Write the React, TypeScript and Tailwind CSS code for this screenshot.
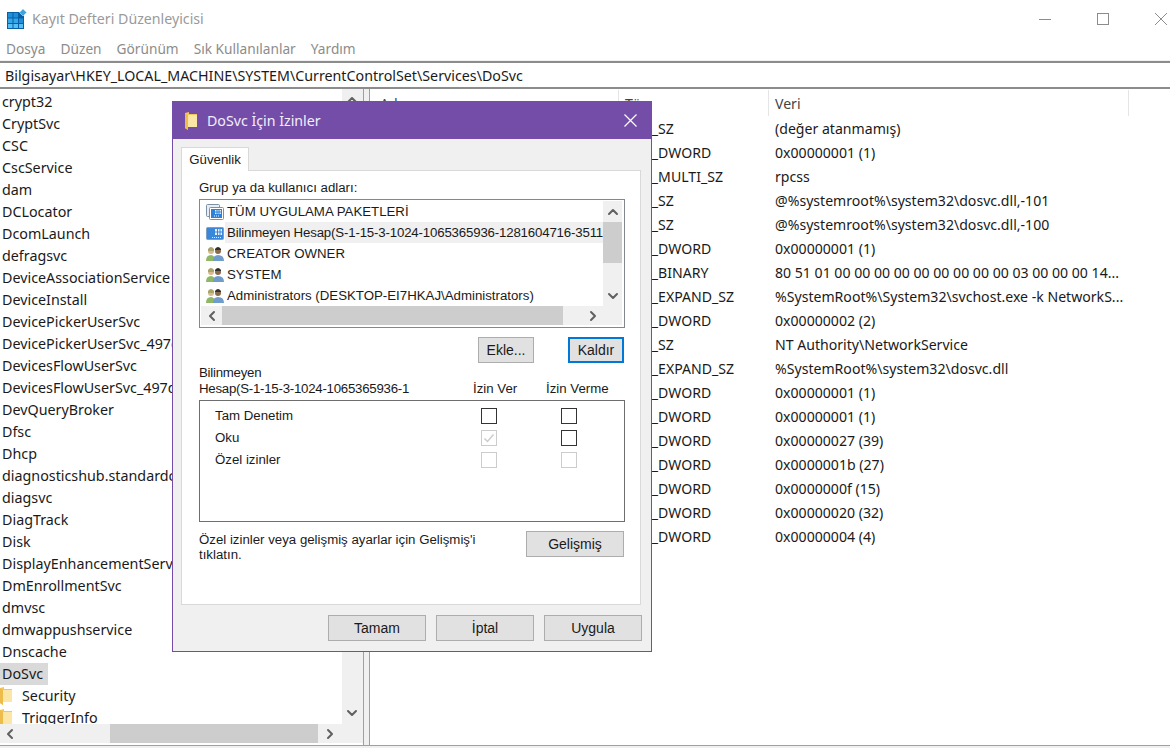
import React from 'react';
import { ChevronUp, ChevronDown, ChevronLeft, ChevronRight } from 'lucide-react';

const keys = [
  'crypt32', 'CryptSvc', 'CSC', 'CscService', 'dam', 'DCLocator', 'DcomLaunch', 'defragsvc',
  'DeviceAssociationService', 'DeviceInstall', 'DevicePickerUserSvc', 'DevicePickerUserSvc_497d',
  'DevicesFlowUserSvc', 'DevicesFlowUserSvc_497d', 'DevQueryBroker', 'Dfsc', 'Dhcp',
  'diagnosticshub.standardco', 'diagsvc', 'DiagTrack', 'Disk', 'DisplayEnhancementServi',
  'DmEnrollmentSvc', 'dmvsc', 'dmwappushservice', 'Dnscache',
];

const values = [
  ['REG_SZ', '(değer atanmamış)'],
  ['REG_DWORD', '0x00000001 (1)'],
  ['REG_MULTI_SZ', 'rpcss'],
  ['REG_SZ', '@%systemroot%\\system32\\dosvc.dll,-101'],
  ['REG_SZ', '@%systemroot%\\system32\\dosvc.dll,-100'],
  ['REG_DWORD', '0x00000001 (1)'],
  ['REG_BINARY', '80 51 01 00 00 00 00 00 00 00 00 00 03 00 00 00 14...'],
  ['REG_EXPAND_SZ', '%SystemRoot%\\System32\\svchost.exe -k NetworkS...'],
  ['REG_DWORD', '0x00000002 (2)'],
  ['REG_SZ', 'NT Authority\\NetworkService'],
  ['REG_EXPAND_SZ', '%SystemRoot%\\system32\\dosvc.dll'],
  ['REG_DWORD', '0x00000001 (1)'],
  ['REG_DWORD', '0x00000001 (1)'],
  ['REG_DWORD', '0x00000027 (39)'],
  ['REG_DWORD', '0x0000001b (27)'],
  ['REG_DWORD', '0x0000000f (15)'],
  ['REG_DWORD', '0x00000020 (32)'],
  ['REG_DWORD', '0x00000004 (4)'],
];

const Folder = () => (
  <svg width="12" height="18" viewBox="0 0 12 18" className="shrink-0">
    <path d="M0 1 L4 0 L4 2 L12 2 L12 15 L3 15 L3 18 L0 16 Z" fill="#f2c75c" />
    <path d="M3 3 L12 3 L12 15 L3 15 Z" fill="#fbe6a6" />
    <path d="M0 1 L3 3 L3 18 L0 16 Z" fill="#eebc4c" />
  </svg>
);

const RegIcon = () => (
  <svg width="20" height="20" viewBox="0 0 20 20" className="shrink-0">
    <rect x="0" y="3" width="17" height="17" fill="#0b5fa5" />
    <path d="M1 4h4.5v4.5H1z" fill="#1f8fd8" />
    <path d="M6.5 4H11v4.5H6.5z" fill="#1f8fd8" />
    <path d="M12 4h4v4.5h-4z" fill="#0b5fa5" />
    <path d="M1 9.5h4.5V14H1z" fill="#35a8ea" />
    <path d="M6.5 9.5H11V14H6.5z" fill="#35a8ea" />
    <path d="M12 9.5h4V14h-4z" fill="#1f8fd8" />
    <path d="M1 15h4.5v4H1z" fill="#55c0f5" />
    <path d="M6.5 15H11v4H6.5z" fill="#55c0f5" />
    <path d="M12 15h4v4h-4z" fill="#55c0f5" />
    <path d="M12.5 3.5 L16 0 L19.5 3.5 L16 7 Z" fill="#3fa3dc" stroke="#bcdcf0" strokeWidth="0.7" />
  </svg>
);

const AppIcon = ({ stacked }: { stacked?: boolean }) => (
  <svg width="18" height="16" viewBox="0 0 18 16" className="shrink-0">
    {stacked ? (
      <>
        <rect x="0.5" y="0.5" width="13" height="12" rx="1" fill="#e6edf5" stroke="#7d8fa3" />
        <rect x="3.5" y="3.5" width="14" height="12" rx="1" fill="#ffffff" stroke="#7d8fa3" />
        <rect x="5" y="5" width="11" height="9" fill="#2f80d8" />
        <path d="M9 6h6v4H9z" fill="#e2f0ff" />
        <path d="M11 6v4M13 6v4M9 8h6" stroke="#2f80d8" />
        <path d="M8 12h6" stroke="#e2f0ff" strokeDasharray="1 1" />
      </>
    ) : (
      <>
        <rect x="0.5" y="2.5" width="17" height="12" rx="1" fill="#3a86d8" stroke="#7d9fc2" />
        <path d="M9 4h7v6H9z" fill="#e2f0ff" />
        <path d="M11.5 4v6M14 4v6M9 7h7" stroke="#3a86d8" />
        <path d="M6 12.5h9" stroke="#e2f0ff" strokeDasharray="1 1" />
      </>
    )}
  </svg>
);

const UsersIcon = () => (
  <svg width="18" height="16" viewBox="0 0 18 16" className="shrink-0">
    <circle cx="5" cy="5" r="3" fill="#d9b98f" />
    <path d="M2 3 Q5 -1 8 3 L8 5 L2 5 Z" fill="#a9a46a" />
    <path d="M0 15 Q0 9 5 9 Q9 9 9 15 Z" fill="#8fb866" />
    <circle cx="12" cy="5" r="3" fill="#8a6a4c" />
    <path d="M9 3 Q12 -1 15 3 L15 4 L9 4 Z" fill="#33302c" />
    <path d="M7 15 Q7 9 12 9 Q18 9 18 15 Z" fill="#6f9ccb" />
  </svg>
);

const Check = ({ state }: { state: 'empty' | 'disabled' | 'checked' }) => (
  <div
    className={`flex h-4 w-4 items-center justify-center border ${state === 'empty' ? 'border-[#333333] bg-white' : 'border-[#cccccc] bg-white'}`}
  >
    {state === 'checked' && (
      <svg width="12" height="12" viewBox="0 0 12 12">
        <path d="M1.5 6.5 L4.5 9.5 L10.5 2.5" fill="none" stroke="#cccccc" strokeWidth="1.5" />
      </svg>
    )}
  </div>
);

const Btn = ({ label, w, focused }: { label: string; w: string; focused?: boolean }) => (
  <div
    className={`flex h-[26px] items-center justify-center text-[14px] text-[#1a1a1a] ${w} ${focused ? 'border-2 border-[#0078d7] bg-[#e1e1e1]' : 'border border-[#adadad] bg-[#e1e1e1]'}`}
  >
    {label}
  </div>
);

type CheckState = 'empty' | 'disabled' | 'checked';

const PermRow = ({ label, allow, deny }: { label: string; allow: CheckState; deny: CheckState }) => (
  <div className="flex h-[22px] items-center pl-[15px]">
    <span className="w-[266px]">{label}</span>
    <div className="w-[80px]">
      <Check state={allow} />
    </div>
    <Check state={deny} />
  </div>
);

const PrincipalRow = ({ icon, label, active }: { icon: React.ReactNode; label: string; active?: boolean }) => (
  <div className="flex h-[21px] items-center pl-[5px]">
    <div className="flex w-[19px] shrink-0 justify-start">{icon}</div>
    <span className={`flex h-[21px] flex-1 items-center whitespace-nowrap pl-[2px] ${active ? 'bg-[#f0f0f0] tracking-[-0.17px]' : ''}`}>{label}</span>
  </div>
);

const arrow = 'h-4 w-4 text-[#606060]';

const Dialog = () => (
  <div className="absolute left-[172px] top-[101px] flex h-[551px] w-[480px] flex-col border border-[#744da9] bg-[#f0f0f0] font-['Liberation_Sans',sans-serif] text-[13.25px] text-[#1a1a1a]">
    <div className="flex h-[37px] shrink-0 items-center bg-[#744da9] pl-3 pr-[14px] text-white">
      <Folder />
      <span className="ml-[10px] font-['Noto_Sans',sans-serif] text-[14.2px] text-[#f3eefa]">DoSvc İçin İzinler</span>
      <svg width="13" height="13" viewBox="0 0 13 13" className="ml-auto">
        <path d="M0.5 0.5 L12.5 12.5 M12.5 0.5 L0.5 12.5" stroke="#ffffff" strokeWidth="1.2" />
      </svg>
    </div>
    <div className="flex flex-1 flex-col pl-2 pr-[9px] pt-2">
      <div className="relative z-10 -mb-px flex h-[24px] w-[68px] items-center justify-center border border-b-0 border-[#d9d9d9] bg-white">Güvenlik</div>
      <div className="h-[435px] w-[460px] border border-[#d9d9d9] bg-white pl-[17px] pr-[15px] pt-[9px]">
        <div className="leading-[16px]">Grup ya da kullanıcı adları:</div>
        <div className="mt-[3px] flex h-[129px] w-[426px] flex-col border border-[#828790] pb-[2px] pl-px pr-[2px] pt-px">
          <div className="flex min-h-0 flex-1">
            <div className="min-w-0 flex-1 overflow-hidden">
              <PrincipalRow icon={<AppIcon stacked />} label="TÜM UYGULAMA PAKETLERİ" />
              <PrincipalRow icon={<AppIcon />} label="Bilinmeyen Hesap(S-1-15-3-1024-1065365936-1281604716-3511" active />
              <PrincipalRow icon={<UsersIcon />} label="CREATOR OWNER" />
              <PrincipalRow icon={<UsersIcon />} label="SYSTEM" />
              <PrincipalRow icon={<UsersIcon />} label="Administrators (DESKTOP-EI7HKAJ\Administrators)" />
            </div>
            <div className="flex w-[19px] shrink-0 flex-col bg-[#f0f0f0]">
              <div className="flex h-[21px] items-center justify-center"><ChevronUp className={arrow} strokeWidth={3} /></div>
              <div className="h-[41px] bg-[#cdcdcd]" />
              <div className="flex-1" />
              <div className="flex h-[21px] items-center justify-center"><ChevronDown className={arrow} strokeWidth={3} /></div>
            </div>
          </div>
          <div className="flex h-[19px] shrink-0 items-center bg-[#f0f0f0]">
            <div className="flex w-[21px] justify-center"><ChevronLeft className={arrow} strokeWidth={3} /></div>
            <div className="h-full w-[341px] bg-[#cdcdcd]" />
            <div className="flex flex-1 justify-center"><ChevronRight className={arrow} strokeWidth={3} /></div>
          </div>
        </div>
        <div className="mt-[9px] flex justify-end gap-[34px] pr-px">
          <Btn label="Ekle..." w="w-[56px]" />
          <Btn label="Kaldır" w="w-[56px]" focused />
        </div>
        <div className="mt-[2px] flex items-end leading-[16px]">
          <div className="w-[274px] tracking-[-0.25px]">Bilinmeyen<br />Hesap(S-1-15-3-1024-1065365936-1</div>
          <div className="w-[73px]">İzin Ver</div>
          <div>İzin Verme</div>
        </div>
        <div className="mt-[3px] h-[122px] w-[426px] border border-[#6e6e6e] pt-[4px]">
          <PermRow label="Tam Denetim" allow="empty" deny="empty" />
          <PermRow label="Oku" allow="checked" deny="empty" />
          <PermRow label="Özel izinler" allow="disabled" deny="disabled" />
        </div>
        <div className="mt-[9px] flex items-start justify-between pr-px">
          <div className="w-[290px] pt-px leading-[15px]">Özel izinler veya gelişmiş ayarlar için Gelişmiş'i tıklatın.</div>
          <Btn label="Gelişmiş" w="w-[98px]" />
        </div>
      </div>
      <div className="mt-[10px] flex justify-end gap-[10px]">
        <Btn label="Tamam" w="w-[98px]" />
        <Btn label="İptal" w="w-[98px]" />
        <Btn label="Uygula" w="w-[98px]" />
      </div>
    </div>
  </div>
);

export default function App() {
  return (
    <div className="relative flex h-[748px] w-[1170px] flex-col overflow-hidden bg-white font-['Noto_Sans',sans-serif] text-[14.1px] text-[#1a1a1a]">
      <div className="flex h-[38px] shrink-0 items-center pl-[7px] pr-[3px]">
        <RegIcon />
        <span className="ml-[5px] text-[14.2px] text-[#9a9a9a]">Kayıt Defteri Düzenleyicisi</span>
        <div className="ml-auto flex items-center gap-[46px]">
          <svg width="12" height="12" viewBox="0 0 12 12"><path d="M0 6.5h12" stroke="#8c8c8c" /></svg>
          <svg width="12" height="12" viewBox="0 0 12 12"><rect x="0.5" y="0.5" width="11" height="11" fill="none" stroke="#8c8c8c" /></svg>
          <svg width="12" height="12" viewBox="0 0 12 12"><path d="M0 0 L12 12 M12 0 L0 12" stroke="#8c8c8c" /></svg>
        </div>
      </div>
      <div className="flex h-[23px] shrink-0 items-center gap-[15px] border-b border-[#f0f0f0] pl-[6px] pt-px text-[13.7px] text-[#8c8c8c]">
        <span>Dosya</span>
        <span>Düzen</span>
        <span>Görünüm</span>
        <span>Sık Kullanılanlar</span>
        <span>Yardım</span>
      </div>
      <div className="flex h-[28px] shrink-0 items-center border-y-2 border-[#8c8c8c] pl-[5px] pt-px text-[14.25px]">
        Bilgisayar\HKEY_LOCAL_MACHINE\SYSTEM\CurrentControlSet\Services\DoSvc
      </div>
      <div className="flex min-h-0 flex-1">
        <div className="flex w-[363px] shrink-0 flex-col pb-[2px] text-[14.3px]">
          <div className="flex min-h-0 flex-1">
            <div className="min-w-0 flex-1 overflow-hidden pl-[2px] pt-[2px]">
              {keys.map((k) => (
                <div key={k} className="h-[22px] whitespace-nowrap leading-[22px]">{k}</div>
              ))}
              <div className="-ml-[2px] h-[22px] w-[48px] bg-[#d9d9d9] pl-[2px] leading-[22px]">DoSvc</div>
              <div className="-ml-[2px] flex h-[22px] items-center"><Folder /><span className="ml-[10px]">Security</span></div>
              <div className="-ml-[2px] flex h-[22px] items-center"><Folder /><span className="ml-[10px]">TriggerInfo</span></div>
            </div>
            <div className="flex w-[21px] shrink-0 flex-col justify-between bg-[#f0f0f0] pr-px">
              <div className="flex h-[22px] items-center justify-center"><ChevronUp className={arrow} strokeWidth={3} /></div>
              <div className="flex h-[22px] items-center justify-center"><ChevronDown className={arrow} strokeWidth={3} /></div>
            </div>
          </div>
          <div className="flex h-[19px] shrink-0 items-center bg-[#f0f0f0]">
            <div className="flex w-[110px] justify-start pl-[2px]"><ChevronLeft className={arrow} strokeWidth={3} /></div>
            <div className="h-full w-[208px] bg-[#cdcdcd]" />
            <div className="flex flex-1 justify-start pl-[4px]"><ChevronRight className={arrow} strokeWidth={3} /></div>
          </div>
        </div>
        <div className="w-[7px] shrink-0 border-x border-[#a0a0a0] bg-[#f0f0f0]" />
        <div className="min-w-0 flex-1">
          <div className="mb-px mt-px flex h-[26px]">
            <div className="w-[249px] border-r border-[#e5e5e5] pl-[10px] pt-px leading-[26px] text-[#444444]">Ad</div>
            <div className="w-[150px] border-r border-[#e5e5e5] pl-[6px] pt-px leading-[26px] text-[#444444]">Tür</div>
            <div className="w-[360px] border-r border-[#e5e5e5] pl-[6px] pt-px leading-[26px] text-[#444444]">Veri</div>
          </div>
          {values.map(([t, v], i) => (
            <div key={i} className="flex h-[24px] items-center">
              <div className="w-[255px]" />
              <div className="w-[150px] whitespace-nowrap">{t}</div>
              <div className="whitespace-nowrap">{v}</div>
            </div>
          ))}
        </div>
      </div>
      <div className="h-[3px] shrink-0 border-t border-[#a0a0a0] bg-[#f0f0f0]" />
      <Dialog />
    </div>
  );
}
